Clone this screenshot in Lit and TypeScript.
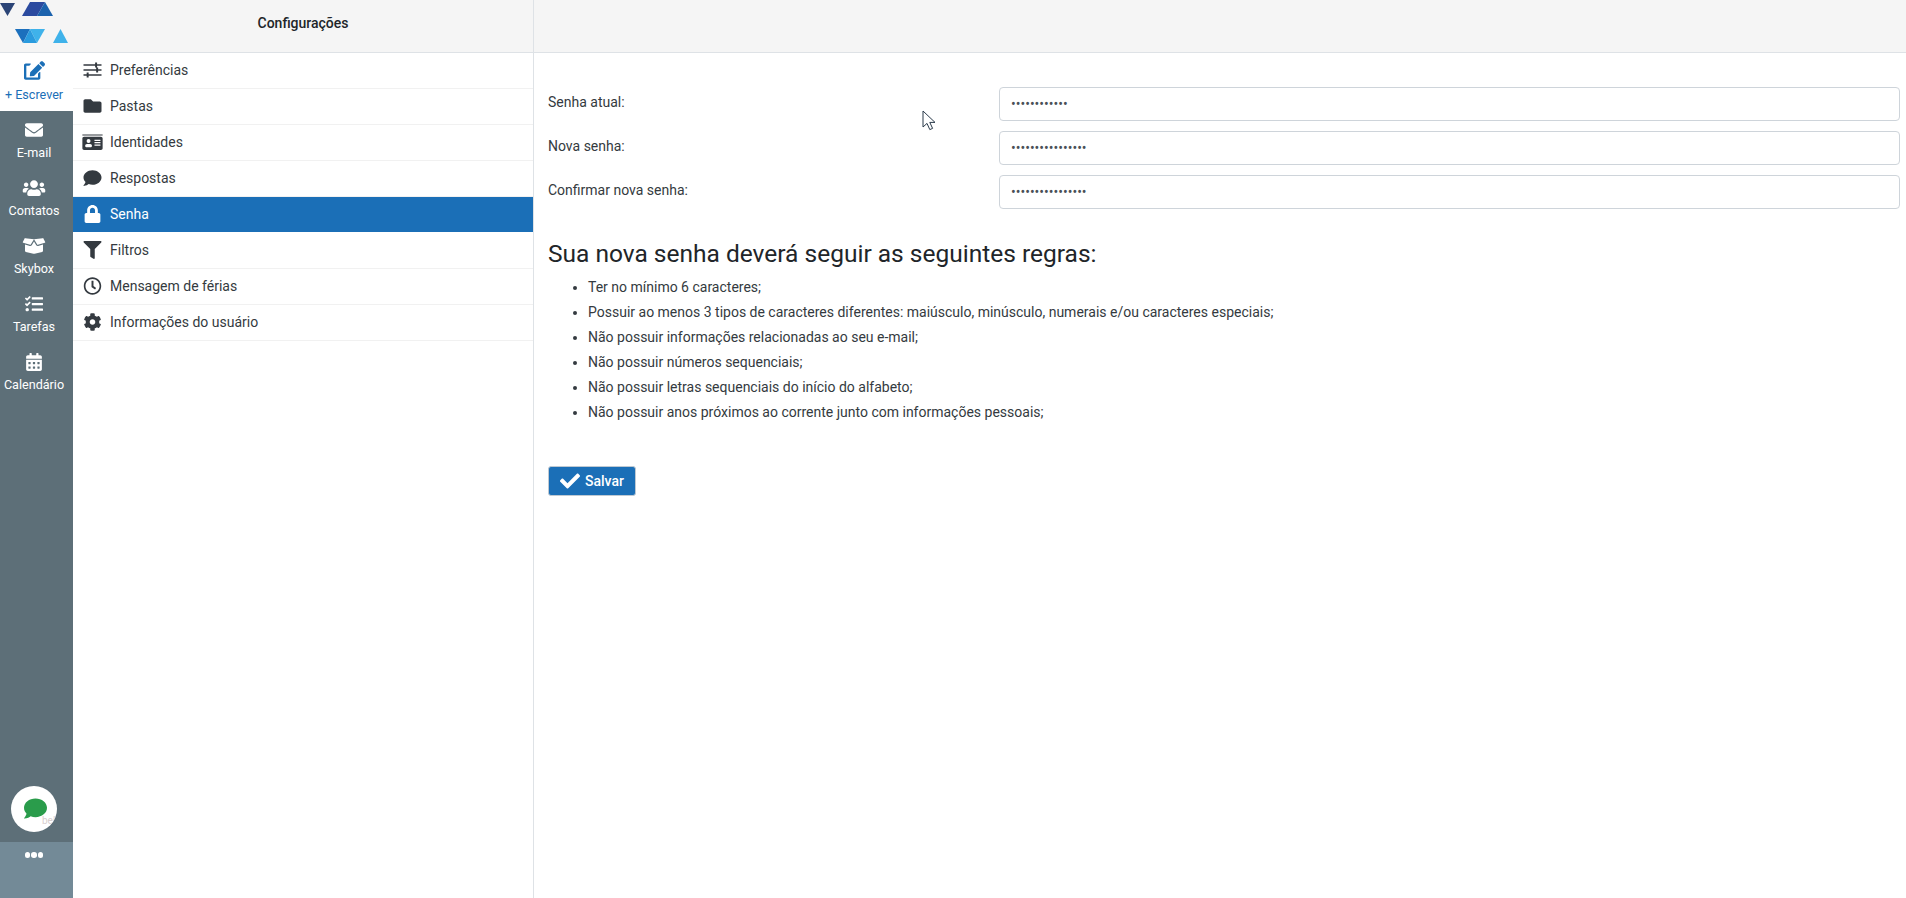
import { LitElement, html, css, svg } from "lit";
import { customElement } from "lit/decorators.js";

const P = {
  edit: ["0 0 576 512", "M402.6 83.2l90.2 90.2c3.8 3.8 3.8 10 0 13.8L274.4 405.6l-92.8 10.3c-12.4 1.4-22.9-9.1-21.5-21.5l10.3-92.8L388.8 83.2c3.8-3.8 10-3.8 13.8 0zm162-22.9l-48.8-48.8c-15.2-15.2-39.9-15.2-55.2 0l-35.4 35.4c-3.8 3.8-3.8 10 0 13.8l90.2 90.2c3.8 3.8 10 3.8 13.8 0l35.4-35.4c15.2-15.3 15.2-40 0-55.2zM384 346.2V448H64V128h73.1c3.2 0 6.2-1.3 8.5-3.5l40-40c7.6-7.6 2.2-20.5-8.5-20.5H48C21.5 64 0 85.5 0 112v352c0 26.5 21.5 48 48 48h352c26.5 0 48-21.5 48-48V306.2c0-10.7-12.9-16-20.5-8.5l-40 40c-2.2 2.3-3.5 5.3-3.5 8.5z"],
  envelope: ["0 0 512 512", "M502.3 190.8c3.9-3.1 9.7-.2 9.7 4.7V400c0 26.5-21.5 48-48 48H48c-26.5 0-48-21.5-48-48V195.6c0-5 5.7-7.8 9.7-4.7 22.4 17.4 52.1 39.5 154.1 113.6 21.1 15.4 56.7 47.8 92.2 47.6 35.7.3 72-32.8 92.3-47.6 102-74.1 131.6-96.3 154-113.7zM256 320c23.2.4 56.6-29.2 73.4-41.4 132.7-96.3 142.8-104.7 173.4-128.7 5.8-4.5 9.2-11.5 9.2-18.9v-19c0-26.500-21.500-48-48-48H48C21.500 64 0 85.500 0 112v19c0 7.400 3.400 14.300 9.200 18.900 30.600 23.900 40.700 32.400 173.400 128.700 16.800 12.200 50.200 41.800 73.400 41.400z"],
  users: ["0 0 640 512", "M96 224c35.300 0 64-28.700 64-64s-28.700-64-64-64-64 28.700-64 64 28.700 64 64 64zm448 0c35.300 0 64-28.700 64-64s-28.700-64-64-64-64 28.700-64 64 28.700 64 64 64zm32 32h-64c-17.600 0-33.500 7.100-45.100 18.600 40.300 22.100 68.900 62 75.100 109.400h66c17.700 0 32-14.300 32-32v-32c0-35.300-28.700-64-64-64zm-256 0c61.900 0 112-50.100 112-112S381.900 32 320 32 208 82.100 208 144s50.100 112 112 112zm76.800 32h-8.300c-20.800 10-43.900 16-68.500 16s-47.600-6-68.500-16h-8.300C179.600 288 128 339.600 128 403.200V432c0 26.500 21.500 48 48 48h288c26.500 0 48-21.500 48-48v-28.800c0-63.600-51.600-115.200-115.200-115.200zm-223.700-13.400C161.500 263.100 145.600 256 128 256H64c-35.300 0-64 28.700-64 64v32c0 17.700 14.300 32 32 32h65.900c6.300-47.400 34.900-87.300 75.200-109.400z"],
  box: ["0 0 640 512", "M425.700 256c-16.900 0-32.800-9-41.400-23.400L320 126l-64.200 106.600c-8.700 14.500-24.600 23.500-41.500 23.500-4.500 0-9-.6-13.300-1.900L64 215v178c0 14.700 10 27.500 24.200 31l216.200 54.100c10.200 2.500 20.900 2.500 31 0L551.800 424c14.200-3.600 24.200-16.400 24.200-31V215l-137 39.100c-4.300 1.300-8.800 1.900-13.300 1.900zm212.600-112.200L586.800 41c-3.100-6.200-9.800-9.800-16.700-8.900L320 64l91.700 152.100c3.800 6.300 11.400 9.300 18.500 7.300l197.900-56.500c9.900-2.900 14.700-13.900 10.200-23.100zM53.200 41L1.700 143.800c-4.600 9.200.3 20.200 10.100 23l197.900 56.500c7.100 2 14.700-1 18.500-7.300L320 64 69.800 32.100c-6.900-.8-13.500 2.700-16.600 8.900z"],
  tasks: ["0 0 512 512", "M139.600 35.500a12 12 0 0 0-17 0L58.900 98.800l-22.700-22.100a12 12 0 0 0-17 0L3.500 92.400a12 12 0 0 0 0 17l47.600 47.400a12.800 12.800 0 0 0 17.600 0l15.600-15.600L156.500 69a12.100 12.100 0 0 0 .1-17zm0 159.200a12 12 0 0 0-17 0l-63.700 63.700-22.700-22.100a12 12 0 0 0-17 0L3.500 252a12 12 0 0 0 0 17L51 316.500a12.800 12.800 0 0 0 17.600 0l15.700-15.700 72.200-72.200a12 12 0 0 0 .1-16.900zM64 368c-26.500 0-48.600 21.500-48.600 48S37.500 464 64 464a48 48 0 0 0 0-96zm432 16H208a16 16 0 0 0-16 16v32a16 16 0 0 0 16 16h288a16 16 0 0 0 16-16v-32a16 16 0 0 0-16-16zm0-320H208a16 16 0 0 0-16 16v32a16 16 0 0 0 16 16h288a16 16 0 0 0 16-16V80a16 16 0 0 0-16-16zm0 160H208a16 16 0 0 0-16 16v32a16 16 0 0 0 16 16h288a16 16 0 0 0 16-16v-32a16 16 0 0 0-16-16z"],
  calendar: ["0 0 448 512", "M0 464c0 26.500 21.500 48 48 48h352c26.500 0 48-21.500 48-48V192H0v272zm320-196c0-6.600 5.400-12 12-12h40c6.600 0 12 5.400 12 12v40c0 6.600-5.400 12-12 12h-40c-6.600 0-12-5.400-12-12v-40zm0 128c0-6.600 5.400-12 12-12h40c6.600 0 12 5.400 12 12v40c0 6.600-5.400 12-12 12h-40c-6.600 0-12-5.400-12-12v-40zM192 268c0-6.600 5.400-12 12-12h40c6.600 0 12 5.400 12 12v40c0 6.600-5.400 12-12 12h-40c-6.600 0-12-5.400-12-12v-40zm0 128c0-6.600 5.400-12 12-12h40c6.600 0 12 5.400 12 12v40c0 6.600-5.400 12-12 12h-40c-6.600 0-12-5.400-12-12v-40zM64 268c0-6.600 5.400-12 12-12h40c6.600 0 12 5.400 12 12v40c0 6.600-5.400 12-12 12H76c-6.600 0-12-5.400-12-12v-40zm0 128c0-6.600 5.400-12 12-12h40c6.600 0 12 5.400 12 12v40c0 6.600-5.400 12-12 12H76c-6.600 0-12-5.400-12-12v-40zM400 64h-48V16c0-8.800-7.200-16-16-16h-32c-8.800 0-16 7.200-16 16v48H160V16c0-8.800-7.200-16-16-16h-32c-8.800 0-16 7.200-16 16v48H48C21.500 64 0 85.500 0 112v48h448v-48c0-26.500-21.500-48-48-48z"],
  sliders: ["0 0 512 512", "M0 90h330v-50h56v50h126v48H386v50h-56v-50H0zM0 232h360v-50h56v50h96v48h-96v50h-56v-50H0zM0 374h90v-50h56v50h366v48H146v50H90v-50H0z"],
  folder: ["0 0 512 512", "M464 128H272l-64-64H48C21.490 64 0 85.490 0 112v288c0 26.510 21.490 48 48 48h416c26.510 0 48-21.490 48-48V176c0-26.510-21.490-48-48-48z"],
  idcard: ["0 0 576 512", "M0 40h576v32H0zM48 104h480c26.500 0 48 21.500 48 48v280c0 26.500-21.500 48-48 48H48c-26.500 0-48-21.500-48-48V152c0-26.500 21.500-48 48-48zm128 70a56 56 0 1 0 0 112 56 56 0 0 0 0-112zm-96 206c0 14 10 24 24 24h144c14 0 24-10 24-24v-20c0-28-22-50-50-50h-8c-10 4-20 6-38 6s-28-2-38-6h-8c-28 0-50 22-50 50zM344 190v36h170v-36zm0 68v36h170v-36zm0 68v36h170v-36z"],
  comment: ["0 0 512 512", "M256 32C114.600 32 0 125.100 0 240c0 49.600 21.400 95 57 130.700C44.500 421.100 2.700 466 2.200 466.500c-2.200 2.300-2.800 5.700-1.500 8.700S4.800 480 8 480c66.300 0 116-31.800 140.600-51.400 32.700 12.300 69 19.400 107.400 19.400 141.400 0 256-93.100 256-208S397.400 32 256 32z"],
  lock: ["0 0 448 512", "M400 224h-24v-72C376 68.200 307.800 0 224 0S72 68.200 72 152v72H48c-26.500 0-48 21.500-48 48v192c0 26.500 21.500 48 48 48h352c26.500 0 48-21.500 48-48V272c0-26.500-21.500-48-48-48zm-104 0H152v-72c0-39.700 32.300-72 72-72s72 32.300 72 72v72z"],
  filter: ["0 0 512 512", "M487.976 0H24.028C2.710 0-8.047 25.866 7.058 40.971L192 225.941V432c0 7.831 3.821 15.170 10.237 19.662l80 55.980C298.020 518.690 320 507.493 320 487.980V225.941l184.947-184.970C520.021 25.896 509.338 0 487.976 0z"],
  clock: ["0 0 512 512", "M256 8C119 8 8 119 8 256s111 248 248 248 248-111 248-248S393 8 256 8zm0 448c-110.500 0-200-89.500-200-200S145.500 56 256 56s200 89.500 200 200-89.500 200-200 200zm61.800-104.400l-84.900-61.700c-3.100-2.300-4.900-5.900-4.900-9.700V116c0-6.600 5.400-12 12-12h32c6.600 0 12 5.400 12 12v141.700l66.800 48.600c5.400 3.900 6.500 11.400 2.600 16.800L334.600 349c-3.900 5.300-11.400 6.500-16.800 2.600z"],
  cog: ["0 0 512 512", "M487.400 315.700l-42.600-24.600c4.300-23.200 4.300-47 0-70.200l42.600-24.600c4.900-2.800 7.100-8.600 5.500-14-11.100-35.600-30-67.800-54.700-94.600-3.800-4.100-10-5.100-14.800-2.300L380.800 110c-17.900-15.400-38.500-27.300-60.800-35.100V25.800c0-5.600-3.900-10.500-9.400-11.700-36.700-8.200-74.300-7.800-109.200 0-5.500 1.200-9.400 6.100-9.400 11.700V75c-22.200 7.900-42.800 19.800-60.800 35.100L88.700 85.500c-4.900-2.800-11-1.900-14.800 2.300-24.700 26.700-43.600 58.900-54.700 94.600-1.700 5.400.6 11.200 5.500 14L67.300 221c-4.300 23.200-4.300 47 0 70.200l-42.600 24.600c-4.900 2.800-7.100 8.600-5.500 14 11.100 35.600 30 67.800 54.700 94.600 3.800 4.100 10 5.100 14.800 2.300l42.600-24.600c17.900 15.400 38.500 27.300 60.800 35.100v49.200c0 5.600 3.900 10.500 9.400 11.700 36.700 8.200 74.300 7.800 109.200 0 5.500-1.200 9.400-6.100 9.400-11.700v-49.200c22.200-7.900 42.800-19.800 60.800-35.100l42.600 24.600c4.900 2.800 11 1.900 14.800-2.300 24.700-26.700 43.600-58.900 54.700-94.600 1.500-5.500-.7-11.300-5.600-14.100zM256 336c-44.100 0-80-35.900-80-80s35.900-80 80-80 80 35.900 80 80-35.900 80-80 80z"],
  check: ["0 0 512 512", "M173.898 439.404l-166.400-166.400c-9.997-9.997-9.997-26.206 0-36.204l36.203-36.204c9.997-9.998 26.207-9.998 36.204 0L192 312.690 432.095 72.596c9.997-9.997 26.207-9.997 36.204 0l36.203 36.204c9.997 9.997 9.997 26.206 0 36.204l-294.400 294.401c-9.998 9.997-26.207 9.997-36.204-.001z"],
};

type IconName = keyof typeof P;
const icon = (n: IconName, cls: string) =>
  html`<svg class=${cls} viewBox=${P[n][0]} fill="currentColor" aria-hidden="true">${svg`<path d=${P[n][1]}></path>`}</svg>`;

const railItems: [IconName, string][] = [
  ["envelope", "E-mail"],
  ["users", "Contatos"],
  ["box", "Skybox"],
  ["tasks", "Tarefas"],
  ["calendar", "Calendário"],
];

const menuItems: [IconName, string][] = [
  ["sliders", "Preferências"],
  ["folder", "Pastas"],
  ["idcard", "Identidades"],
  ["comment", "Respostas"],
  ["lock", "Senha"],
  ["filter", "Filtros"],
  ["clock", "Mensagem de férias"],
  ["cog", "Informações do usuário"],
];

const fields: [string, number][] = [
  ["Senha atual:", 12],
  ["Nova senha:", 16],
  ["Confirmar nova senha:", 16],
];

const rules = [
  "Ter no mínimo 6 caracteres;",
  "Possuir ao menos 3 tipos de caracteres diferentes: maiúsculo, minúsculo, numerais e/ou caracteres especiais;",
  "Não possuir informações relacionadas ao seu e-mail;",
  "Não possuir números sequenciais;",
  "Não possuir letras sequenciais do início do alfabeto;",
  "Não possuir anos próximos ao corrente junto com informações pessoais;",
];

@customElement("app-root")
export class AppRoot extends LitElement {
  static styles = css`
    :host {
      display: flex;
      flex-direction: column;
      height: 898px;
      overflow: hidden;
      position: relative;
      background: #fff;
      color: #343a40;
      font-family: Roboto, "Liberation Sans", sans-serif;
      font-size: 14px;
    }
    .top {
      display: flex;
      flex: none;
      height: 53px;
      box-sizing: border-box;
      background: #f5f5f5;
      border-bottom: 1px solid #dee2e6;
    }
    .logo { width: 73px; height: 52px; flex: none; display: block; }
    .title {
      width: 461px;
      flex: none;
      border-right: 1px solid #dee2e6;
      box-sizing: border-box;
      text-align: center;
      line-height: 47px;
      font-weight: 500;
      color: #212529;
      font-size: 14px;
    }
    .main { display: flex; flex: 1; min-height: 0; }
    .rail {
      width: 73px;
      flex: none;
      display: flex;
      flex-direction: column;
      background: #5d6f78;
      color: #fff;
      font-size: 12.6px;
      text-align: center;
    }
    .write {
      height: 58px;
      background: #fff;
      color: #1b6fb7;
      display: flex;
      flex-direction: column;
      align-items: center;
      padding: 8px 5px 0 0;
      box-sizing: border-box;
    }
    .i-write { width: 21px; height: 19px; margin-bottom: 7px; }
    .rail-list { display: flex; flex-direction: column; flex: 1; padding-top: 10px; }
    .rail-item {
      height: 58px;
      display: flex;
      flex-direction: column;
      align-items: center;
      line-height: 14px;
      padding-right: 5px;
    }
    .i-rail { width: 24px; height: 18px; margin-bottom: 7px; }
    .chat-wrap { display: flex; justify-content: center; padding: 0 5px 10px 0; }
    .chat {
      position: relative;
      width: 46px;
      height: 46px;
      border-radius: 50%;
      background: #fff;
      display: flex;
      align-items: center;
      justify-content: center;
      overflow: hidden;
    }
    .i-chat { width: 23px; height: 23px; color: #2a9c4b; margin: 0 0 2px 3px; }
    .bel {
      position: absolute;
      left: 31px;
      bottom: 6px;
      font-size: 10px;
      line-height: 10px;
      color: #d9cfcf;
    }
    .more {
      height: 56px;
      background: #738a97;
      display: flex;
      justify-content: center;
      gap: 1px;
      padding: 10px 5px 0 0;
      box-sizing: border-box;
    }
    .dot { width: 5.5px; height: 5.5px; border-radius: 50%; background: #fff; }
    .menu {
      width: 461px;
      flex: none;
      box-sizing: border-box;
      border-right: 1px solid #dee2e6;
    }
    .menu-item {
      height: 36px;
      box-sizing: border-box;
      display: flex;
      align-items: center;
      border-bottom: 1px solid #f1f1f1;
      color: #343a40;
      padding-bottom: 1px;
    }
    .menu-item.active {
      background: #1b6fb7;
      color: #fff;
      border-bottom-color: #fff;
    }
    .menu-icon { width: 37px; flex: none; display: flex; justify-content: center; padding-left: 1px; box-sizing: border-box; }
    .i-menu { width: 21px; height: 18px; }
    .content { flex: 1; min-width: 0; padding: 34px 6px 0 14px; position: relative; }
    .row {
      display: grid;
      grid-template-columns: 451px 1fr;
      align-items: center;
      height: 34px;
      margin-bottom: 10px;
    }
    label { padding-bottom: 5px; }
    .input {
      height: 34px;
      box-sizing: border-box;
      width: 100%;
      border: 1px solid #ced4da;
      border-radius: 4px;
      padding: 0 11px;
      font-family: inherit;
      font-size: 14px;
      color: #495057;
      background: #fff;
      outline: none;
    }
    h2 {
      margin: 30px 0 7px;
      font-size: 24.5px;
      font-weight: 400;
      line-height: 29px;
      color: #212529;
    }
    ul { margin: 0; padding: 0 0 0 40px; }
    li { line-height: 25px; height: 25px; }
    .save {
      margin-top: 41px;
      display: inline-flex;
      align-items: center;
      gap: 5px;
      width: 88px;
      height: 30px;
      padding: 0 0 0 11px;
      box-sizing: border-box;
      background: #1b6fb7;
      color: #fff;
      border: 1px solid #bfc9d2;
      border-radius: 3px;
      font-family: inherit;
      font-size: 14px;
      font-weight: 500;
    }
    .i-check { width: 20px; height: 20px; }
    .cursor { position: absolute; left: 388px; top: 57px; width: 14px; height: 21px; }
  `;

  render() {
    return html`
      <div class="top">
        <svg class="logo" viewBox="0 0 73 52" aria-hidden="true">
          <polygon points="0,3 15,3 7.500,16" fill="#2b4476"></polygon>
          <polygon points="22,16 30,2 45,2 37,16" fill="#2b4a9f"></polygon>
          <polygon points="37,16 45,2 53,16" fill="#1b62ad"></polygon>
          <polygon points="15,29 30,29 23,43" fill="#1c70bd"></polygon>
          <polygon points="30,29 45,29 37,43" fill="#3fb2ea"></polygon>
          <polygon points="23,43 30,29 37,43" fill="#2a9bde"></polygon>
          <polygon points="53,43 68,43 60.500,29" fill="#3fb2ea"></polygon>
        </svg>
        <div class="title">Configurações</div>
      </div>
      <div class="main">
        <nav class="rail">
          <div class="write">${icon("edit", "i-write")}<span>+ Escrever</span></div>
          <div class="rail-list">
            ${railItems.map(([n, l]) => html`<div class="rail-item">${icon(n, "i-rail")}<span>${l}</span></div>`)}
          </div>
          <div class="chat-wrap">
            <div class="chat">${icon("comment", "i-chat")}<span class="bel">bel</span></div>
          </div>
          <div class="more"><span class="dot"></span><span class="dot"></span><span class="dot"></span></div>
        </nav>
        <div class="menu">
          ${menuItems.map(([n, l]) => html`
            <div class="menu-item ${l === "Senha" ? "active" : ""}">
              <span class="menu-icon">${icon(n, "i-menu")}</span>
              <span>${l}</span>
            </div>`)}
        </div>
        <main class="content">
          ${fields.map(([l, c]) => html`
            <div class="row"><label>${l}</label><input class="input" type="password" .value=${"x".repeat(c)} /></div>`)}
          <h2>Sua nova senha deverá seguir as seguintes regras:</h2>
          <ul>${rules.map((r) => html`<li>${r}</li>`)}</ul>
          <button class="save">${icon("check", "i-check")}<span>Salvar</span></button>
          <svg class="cursor" viewBox="0 0 14 21" aria-hidden="true">
            <path d="M1 1v16l4-3.600 2.800 6.200 2.800-1.200-2.800-6h5.200z" fill="#fff" stroke="#2a3a4a" stroke-width="1"></path>
          </svg>
        </main>
      </div>
    `;
  }
}
